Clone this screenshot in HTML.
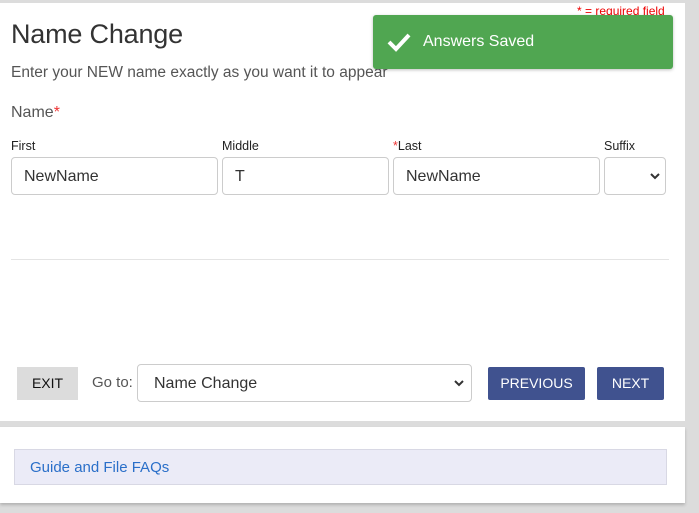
<!DOCTYPE html>
<html><head><style>
*{box-sizing:border-box;margin:0;padding:0}
body{width:699px;height:513px;background:#dcdcdc;font-family:"Liberation Sans",Arial,sans-serif;position:relative;overflow:hidden;color:#222}
.p{position:absolute;background:#fff}
.a{position:absolute}
.inp{position:absolute;top:157px;height:38px;border:1px solid #ccc;border-radius:4px;background:#fff;font-size:16px;color:#333;padding:10px 12px}
.lbl{position:absolute;top:139px;font-size:12.5px;color:#222}
.btn{position:absolute;top:367px;height:33px;background:#40528f;color:#fff;font-size:14px;text-align:center;line-height:33px;border-radius:2px}
</style></head><body>
<div class="p" style="left:0;top:3px;width:685px;height:418px"></div>
<div class="p" style="left:0;top:427px;width:685px;height:76px;box-shadow:0 2px 3px rgba(0,0,0,.2)"></div>
<div class="a" style="left:577px;top:4px;font-size:12px;color:#e00">* = required field</div>
<div class="a" style="left:11px;top:19px;font-size:27px;color:#333;letter-spacing:-0.2px">Name Change</div>
<div class="a" style="left:11px;top:64px;font-size:15.5px;color:#555">Enter your NEW name exactly as you want it to appear</div>
<div class="a" style="left:11px;top:104px;font-size:16px;color:#555">Name<span style="color:#e33">*</span></div>
<div class="lbl" style="left:11px">First</div>
<div class="lbl" style="left:222px">Middle</div>
<div class="lbl" style="left:393px"><span style="color:#e33">*</span>Last</div>
<div class="lbl" style="left:604px">Suffix</div>
<div class="inp" style="left:11px;width:207px">NewName</div>
<div class="inp" style="left:222px;width:167px">T</div>
<div class="inp" style="left:393px;width:207px">NewName</div>
<div class="inp" style="left:604px;width:62px"><svg class="a" style="left:45px;top:15px" width="10" height="7" viewBox="0 0 10 7"><path d="M1 1l4 4 4-4" stroke="#333" stroke-width="2" fill="none"/></svg></div>
<div class="a" style="left:11px;top:259px;width:658px;height:1px;background:#e4e4e4"></div>
<div class="a" style="left:17px;top:367px;width:61px;height:33px;background:#dcdcdc;font-size:14px;text-align:center;line-height:33px;color:#111">EXIT</div>
<div class="a" style="left:92px;top:374px;font-size:15px;color:#555">Go to:</div>
<div class="inp" style="left:137px;top:364px;width:335px;height:38px;font-size:16px;padding:10px 16px">Name Change<svg class="a" style="left:316px;top:15px" width="10" height="7" viewBox="0 0 10 7"><path d="M1 1l4 4 4-4" stroke="#333" stroke-width="2" fill="none"/></svg></div>
<div class="btn" style="left:488px;width:97px">PREVIOUS</div>
<div class="btn" style="left:597px;width:67px">NEXT</div>
<div class="a" style="left:14px;top:449px;width:653px;height:36px;background:#ebebf7;border:1px solid #d8d8e4;color:#2a6fc9;font-size:15px;padding:9px 15px">Guide and File FAQs</div>
<div class="a" style="left:373px;top:15px;width:300px;height:54px;background:#50a651;border-radius:3px;box-shadow:0 1px 3px rgba(0,0,0,.25)">
<svg class="a" style="left:13px;top:17px" width="26" height="20" viewBox="0 0 26 20"><path d="M3 10l7 7L23 3" stroke="#fff" stroke-width="4" fill="none"/></svg>
<div class="a" style="left:50px;top:18px;color:#fff;font-size:16px">Answers Saved</div></div>
</body></html>
